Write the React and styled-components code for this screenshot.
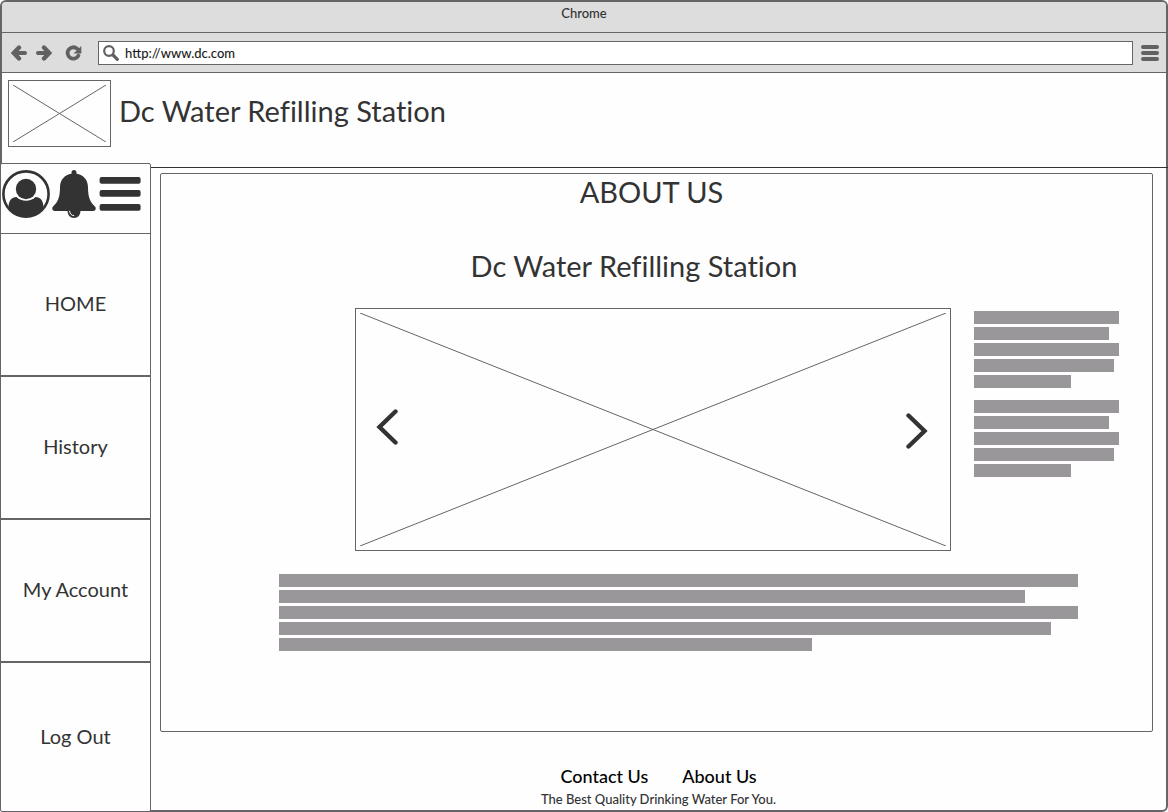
import React from 'react';
import styled, { createGlobalStyle } from 'styled-components';

const line = '#666467';
const ink = '#333334';
const chrome = '#dddddd';
const icon = '#626063';

const GlobalStyle = createGlobalStyle`
  *, *::before, *::after { box-sizing: border-box; }
  body {
    margin: 0;
    background: #fefefe;
    color: ${ink};
    font-family: Lato, "Open Sans", sans-serif;
    font-variant-ligatures: none;
  }
`;

const Window = styled.div`
  display: flex;
  flex-direction: column;
  min-height: 100vh;
  border: 2px solid ${line};
  border-radius: 6px;
`;

const TitleBar = styled.div`
  height: 31px;
  border-bottom: 1px solid ${line};
  border-radius: 4px 4px 0 0;
  background: ${chrome};
  font-size: 13px;
  font-weight: 500;
  line-height: 22px;
  text-align: center;
`;

const Toolbar = styled.div`
  display: flex;
  align-items: center;
  height: 40px;
  padding: 0 7px 0 9px;
  border-bottom: 1px solid ${line};
  background: ${chrome};
`;

const IconButton = styled.button`
  display: block;
  flex: none;
  margin: 0;
  padding: 0;
  border: 0;
  background: none;
  color: ${(p) => p.$color || icon};
  cursor: pointer;

  svg { display: block; }
`;

const HistoryButtons = styled.div`
  display: flex;
  align-items: center;
  gap: 9px;
  margin-right: 16px;
`;

const ReloadButton = styled(IconButton)`
  margin-left: 4px;
`;

const AddressBox = styled.label`
  display: flex;
  flex: 1;
  align-items: center;
  gap: 6px;
  height: 24px;
  margin-right: 8px;
  padding-left: 4px;
  border: 1px solid ${line};
  background: #fff;
  color: ${icon};
`;

const AddressInput = styled.input`
  flex: 1;
  min-width: 0;
  padding: 0;
  border: 0;
  outline: 0;
  background: none;
  color: #1c1c1c;
  font: 500 13px/20px Lato, "Open Sans", sans-serif;
`;

const Header = styled.header`
  display: flex;
  align-items: flex-start;
  gap: 8px;
  height: 90px;
  padding: 7px 6px 0;
`;

const Heading = styled.h2`
  margin: 0;
  padding: ${(p) => p.$pad || '0'};
  font-size: 29px;
  font-weight: 400;
  line-height: 36px;
  text-align: center;
`;

const SiteName = styled(Heading).attrs({ as: 'h1' })`
  padding-top: 13px;
`;

const Placeholder = styled.div`
  position: relative;
  display: flex;
  width: ${(p) => p.$width || 'auto'};
  height: ${(p) => p.$height};
  flex: ${(p) => (p.$width ? 'none' : '1')};
  padding: 4px;
  border: 1px solid ${line};

  > svg { display: block; width: 100%; height: 100%; }
`;

const Body = styled.div`
  display: grid;
  flex: 1;
  grid-template-columns: 149px 1fr;
`;

const Sidebar = styled.aside`
  display: flex;
  flex-direction: column;
  margin: 0 0 -2px -2px;
  border: 1px solid ${line};
  border-radius: 2px;
  background: #fefefe;
`;

const QuickActions = styled.div`
  display: flex;
  align-items: flex-start;
  height: 69px;
  gap: 2px;
  padding: 6px 1px 0;
`;

const Nav = styled.nav`
  display: flex;
  flex: 1;
  flex-direction: column;
`;

const NavLink = styled.a`
  display: flex;
  flex: 0 0 143px;
  align-items: center;
  justify-content: center;
  padding-bottom: 3px;
  border-top: 1px solid ${line};
  border-bottom: 1px solid ${line};
  color: ${ink};
  font-size: 20px;
  text-decoration: none;

  &:last-child { flex: 1 0 143px; border-bottom: 0; }
`;

const Main = styled.main`
  display: flex;
  flex-direction: column;
  min-width: 0;
`;

const Rule = styled.hr`
  width: calc(100% + 2px);
  height: 5px;
  margin: 0 0 5px;
  border: 0;
  border-bottom: 1px solid ${ink};
`;

const Panel = styled.section`
  flex: 1;
  margin: 0 13px 0 9px;
  border: 1px solid ${line};
  border-radius: 2px;
`;

const Feature = styled.div`
  display: flex;
  gap: 23px;
  padding: 24px 33px 0 194px;
`;

const Aside = styled.div`
  display: flex;
  flex-direction: column;
  width: 145px;
  gap: 12px;
  padding-top: 3px;
`;

const Lines = styled.div`
  display: flex;
  flex-direction: column;
  gap: 3px;
  margin: ${(p) => p.$margin || '0'};
`;

const Bar = styled.div`
  width: ${(p) => p.$width};
  height: 13px;
  background: #999799;
`;

const Arrow = styled(IconButton)`
  position: absolute;
  top: ${(p) => p.$top};
  left: ${(p) => p.$left || 'auto'};
  right: ${(p) => p.$right || 'auto'};
`;

const Footer = styled.footer`
  padding: 32px 0 0;
  text-align: center;
  color: ${ink};
`;

const FooterLinks = styled.div`
  display: flex;
  justify-content: center;
  gap: 34px;
`;

const FooterLink = styled.a`
  color: #000;
  font-size: 18px;
  font-weight: 500;
  line-height: 24px;
  text-decoration: none;
`;

const Tagline = styled.p`
  margin: 0;
  font-size: 13px;
  font-weight: 500;
  line-height: 22px;
`;

const Cross = () => (
  <svg stroke={line} strokeWidth="1" aria-hidden="true">
    <line x1="0" y1="0" x2="100%" y2="100%" />
    <line x1="0" y1="100%" x2="100%" y2="0" />
  </svg>
);

const BackArrow = ({ flip }) => (
  <svg width="16" height="16" viewBox="0 0 16 16" fill="none" stroke="currentColor">
    <g transform={flip ? 'translate(16 0) scale(-1 1)' : undefined}>
      <path d="M4 8H14" strokeWidth="4" strokeLinecap="round" />
      <path d="M8 2.500 2.800 8 8 13.500" strokeWidth="4.400" strokeLinecap="round" />
    </g>
  </svg>
);

const Reload = () => (
  <svg width="17" height="16" viewBox="0 0 17 16" fill="none">
    <path d="M12 3.600A5.700 5.700 0 1 0 13.400 10.600" stroke="currentColor" strokeWidth="3.800" strokeLinecap="round" />
    <path d="M16.300 1V8.600H8.600Z" fill="currentColor" />
  </svg>
);

const Search = () => (
  <svg width="16" height="16" viewBox="0 0 16 16" fill="none" stroke="currentColor" aria-hidden="true">
    <circle cx="6" cy="6" r="4.8" strokeWidth="2.200" />
    <path d="m10 10 4.300 4.300" strokeWidth="3.200" strokeLinecap="round" />
  </svg>
);

const ToolbarMenu = () => (
  <svg width="18" height="18" viewBox="0 0 18 18" stroke="currentColor" strokeWidth="4" strokeLinecap="round">
    <path d="M2 3h14M2 9h14M2 15h14" />
  </svg>
);

const User = () => (
  <svg width="48" height="48" viewBox="0 0 48 48">
    <circle cx="24" cy="24" r="22.600" fill="none" stroke="currentColor" strokeWidth="2.600" />
    <circle cx="24" cy="19" r="10.200" fill="currentColor" />
    <path d="M6.500 36.500C7 30.500 9.500 27 14.500 27c2.500 2.500 5.800 3.800 9.500 3.800s7-1.300 9.500-3.800c5 0 7.500 3.500 8 9.500C38 43 31 46.800 24 46.800S10 43 6.500 36.500Z" fill="currentColor" />
  </svg>
);

const Bell = () => (
  <svg width="44" height="48" viewBox="0 0 44 48">
    <path
      d="M22 0c1.600 0 2.500 1 2.500 2.600v1.200C31.500 4.800 36 10 36 17.500c0 9.500 2 14.500 7.400 19.500.8 1.700.2 4-2.400 4H3C.4 41-.2 38.700.6 37 6 32 8 27 8 17.500 8 10 12.500 4.800 19.500 3.800V2.600C19.500 1 20.400 0 22 0Z"
      fill="currentColor"
    />
    <path d="M15.500 40.500h13c0 4.500-2.500 7.500-6.500 7.500s-6.500-3-6.500-7.500Z" fill="currentColor" />
    <path d="M17.600 41.200c.2 2.600 1.800 4.300 4.200 4.500" fill="none" stroke="#fefefe" strokeWidth="1" strokeLinecap="round" />
  </svg>
);

const Menu = () => (
  <svg width="43" height="48" viewBox="0 0 43 48" fill="currentColor">
    <rect x="1.600" y="7" width="41" height="6.700" rx="2" />
    <rect x="1.600" y="20" width="41" height="6.700" rx="2" />
    <rect x="1.600" y="34" width="41" height="6.700" rx="2" />
  </svg>
);

const Chevron = ({ flip }) => (
  <svg width="22" height="36" viewBox="0 0 22 36" fill="none" stroke="currentColor" strokeWidth="4.400" strokeLinecap="round">
    <path d={flip ? 'M2.500 2.500 18.500 18 2.500 33.500' : 'M19.500 2.500 3.500 18l16 15.500'} />
  </svg>
);

const widths = ['100%', '93.4%', '100%', '96.6%', '66.7%'];

const TextBlock = ({ margin }) => (
  <Lines $margin={margin}>
    {widths.map((w, i) => <Bar key={i} $width={w} />)}
  </Lines>
);

const navItems = ['HOME', 'History', 'My Account', 'Log Out'];

export default function App() {
  return (
    <>
      <GlobalStyle />
      <Window>
        <TitleBar>Chrome</TitleBar>
        <Toolbar>
          <HistoryButtons>
            <IconButton aria-label="Back"><BackArrow /></IconButton>
            <IconButton aria-label="Forward"><BackArrow flip /></IconButton>
            <ReloadButton aria-label="Reload"><Reload /></ReloadButton>
          </HistoryButtons>
          <AddressBox>
            <Search />
            <AddressInput aria-label="Address" defaultValue="http://www.dc.com" />
          </AddressBox>
          <IconButton aria-label="Browser menu"><ToolbarMenu /></IconButton>
        </Toolbar>

        <Header>
          <Placeholder $width="103px" $height="67px"><Cross /></Placeholder>
          <SiteName>Dc Water Refilling Station</SiteName>
        </Header>

        <Body>
          <Sidebar>
            <QuickActions>
              <IconButton $color={ink} aria-label="Profile"><User /></IconButton>
              <IconButton $color={ink} aria-label="Notifications"><Bell /></IconButton>
              <IconButton $color={ink} aria-label="Menu"><Menu /></IconButton>
            </QuickActions>
            <Nav>
              {navItems.map((item) => <NavLink key={item} href="#">{item}</NavLink>)}
            </Nav>
          </Sidebar>

          <Main>
            <Rule />
            <Panel>
              <Heading $pad="0 10px 0 0">ABOUT US</Heading>
              <Heading as="h3" $pad="38px 45px 0 0">Dc Water Refilling Station</Heading>
              <Feature>
                <Placeholder $height="243px">
                  <Cross />
                  <Arrow $color={ink} $top="100px" $left="20px" aria-label="Previous"><Chevron /></Arrow>
                  <Arrow $color={ink} $top="104px" $right="22px" aria-label="Next"><Chevron flip /></Arrow>
                </Placeholder>
                <Aside>
                  <TextBlock />
                  <TextBlock />
                </Aside>
              </Feature>
              <TextBlock margin="23px 74px 0 118px" />
            </Panel>
            <Footer>
              <FooterLinks>
                <FooterLink href="#">Contact Us</FooterLink>
                <FooterLink href="#">About Us</FooterLink>
              </FooterLinks>
              <Tagline>The Best Quality Drinking Water For You.</Tagline>
            </Footer>
          </Main>
        </Body>
      </Window>
    </>
  );
}
